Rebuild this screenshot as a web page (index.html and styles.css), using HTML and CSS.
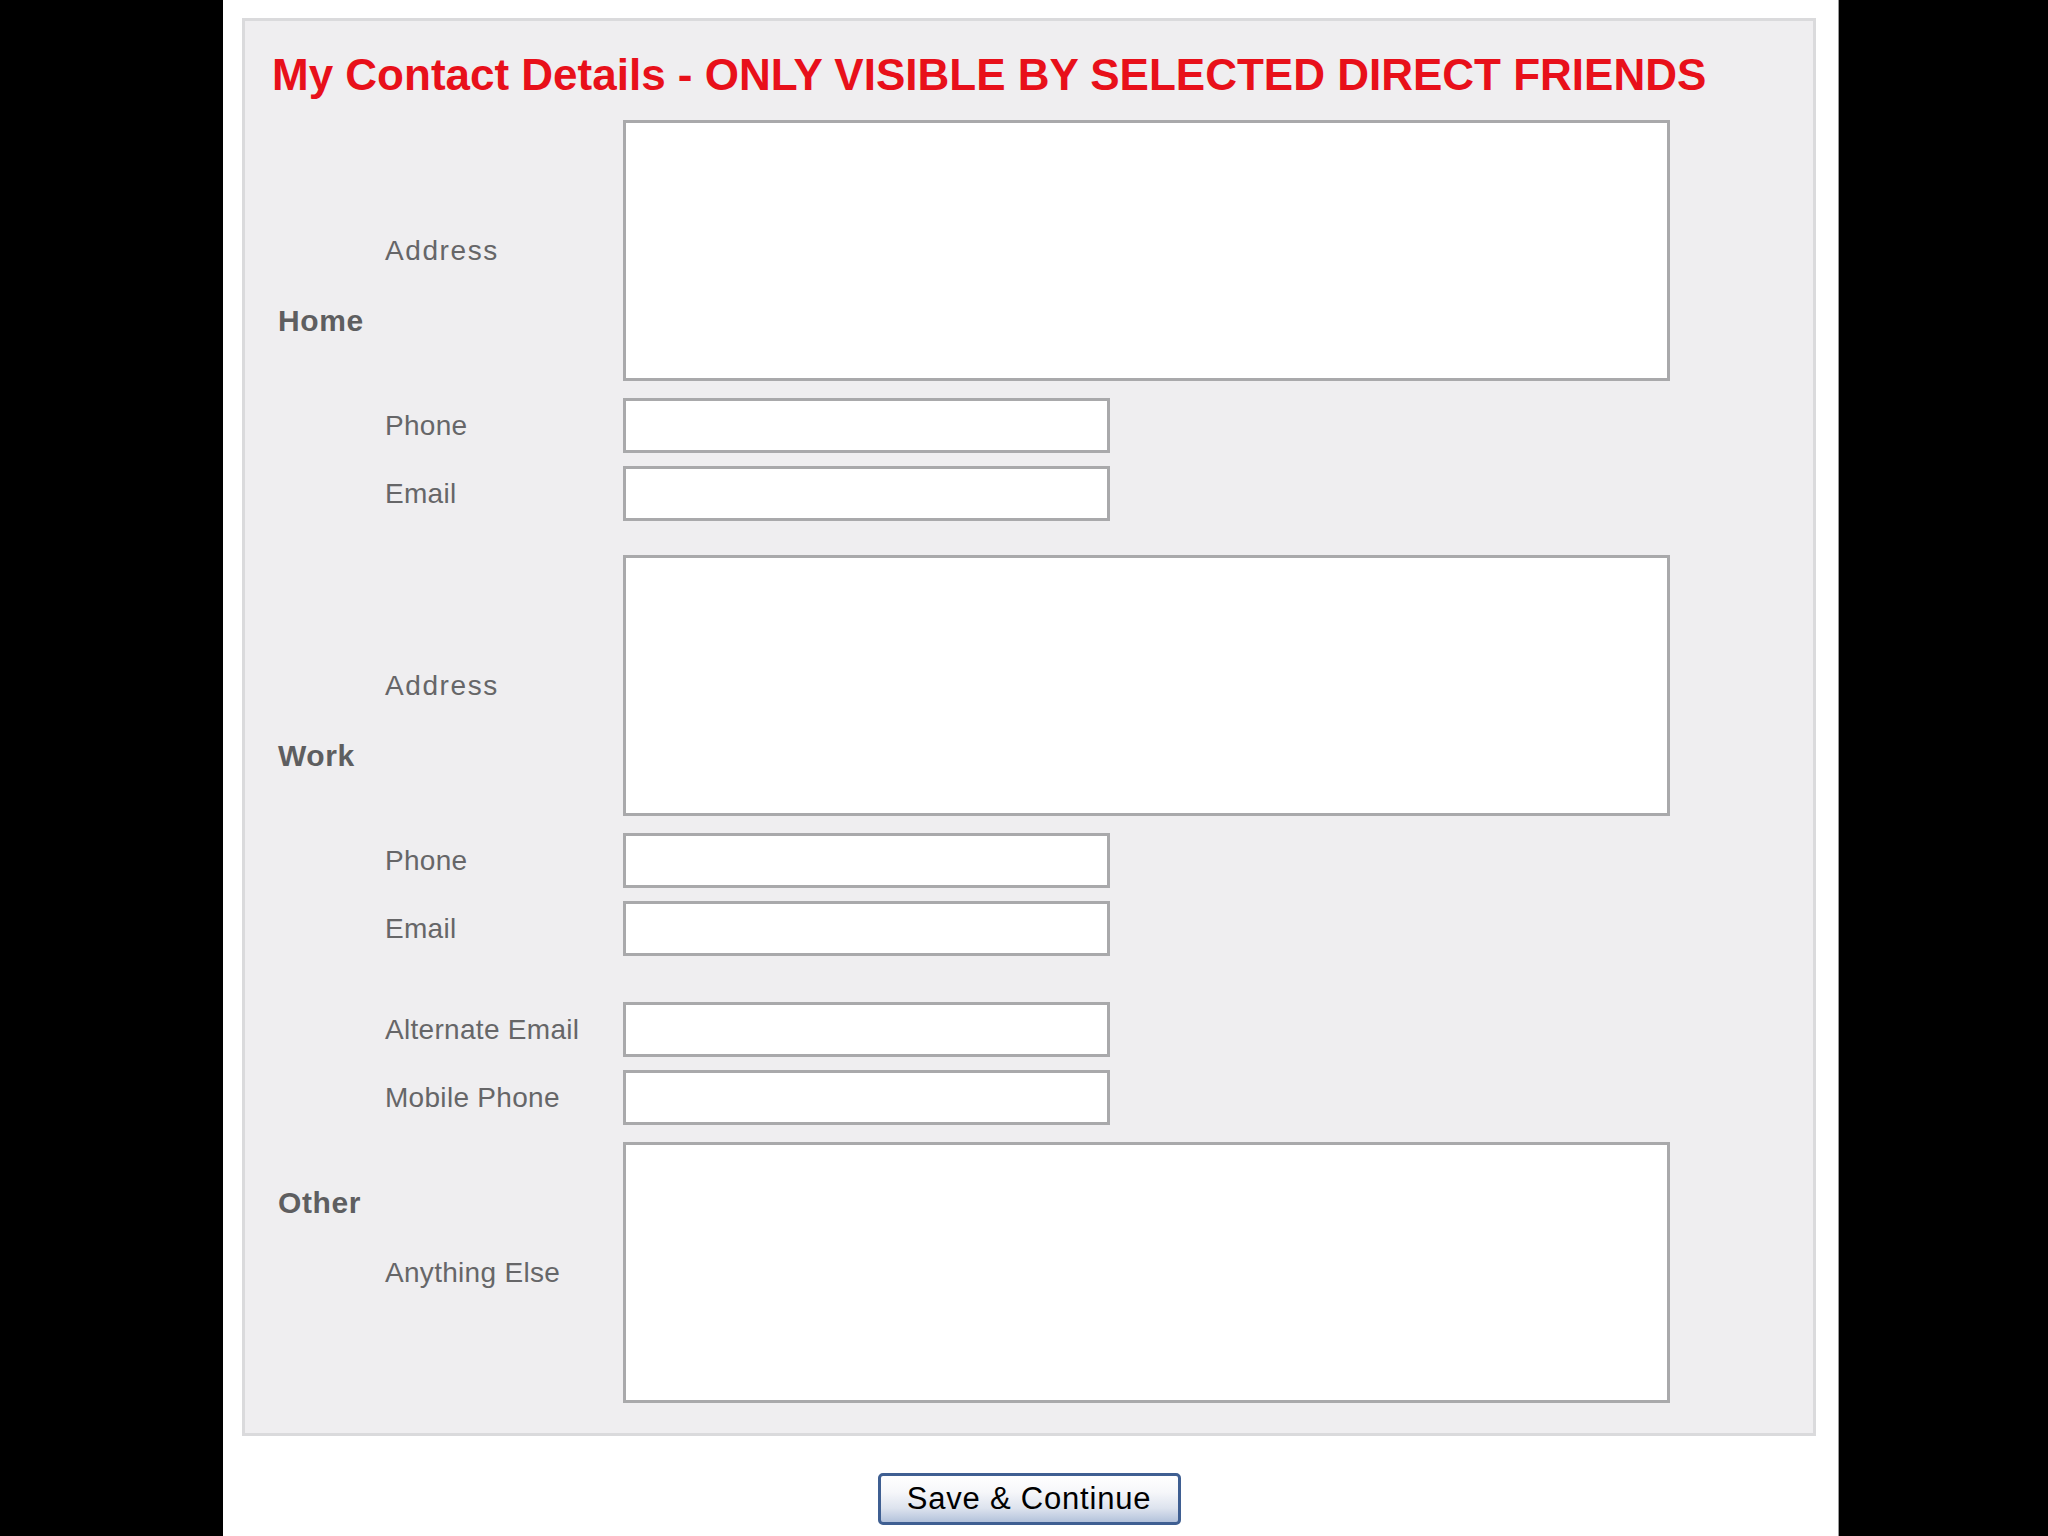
FILE: index.html
```html
<!DOCTYPE html>
<html>
<head>
<meta charset="utf-8">
<title>My Contact Details</title>
<link rel="stylesheet" href="styles.css">
</head>
<body>
<div class="page">
  <div class="panel">
    <h1 class="title">My Contact Details - ONLY VISIBLE BY SELECTED DIRECT FRIENDS</h1>

    <div class="section">
      <div class="group">Home</div>
      <div class="fields">
        <div class="field tall"><label class="label wide">Address</label><textarea class="area"></textarea></div>
        <div class="field"><label class="label">Phone</label><input class="box" type="text"></div>
        <div class="field"><label class="label">Email</label><input class="box" type="text"></div>
      </div>
    </div>

    <div class="section work">
      <div class="group">Work</div>
      <div class="fields">
        <div class="field tall"><label class="label wide">Address</label><textarea class="area"></textarea></div>
        <div class="field"><label class="label">Phone</label><input class="box" type="text"></div>
        <div class="field"><label class="label">Email</label><input class="box" type="text"></div>
      </div>
    </div>

    <div class="section other">
      <div class="group">Other</div>
      <div class="fields">
        <div class="field"><label class="label">Alternate Email</label><input class="box" type="text"></div>
        <div class="field"><label class="label">Mobile Phone</label><input class="box" type="text"></div>
        <div class="field tall"><label class="label">Anything Else</label><textarea class="area"></textarea></div>
      </div>
    </div>
  </div>

  <div class="actions">
    <button class="save" type="button">Save &amp; Continue</button>
  </div>
</div>
</body>
</html>
```
FILE: styles.css
```css
html, body {
  margin: 0;
  padding: 0;
  background: #000;
}

body {
  font-family: "Liberation Sans", Arial, sans-serif;
}

.page {
  box-sizing: border-box;
  width: 1616px;
  min-height: 1536px;
  margin-left: 223px;
  padding: 18px 22px 0 19px;
  background: #fff;
  border-right: 1px solid #9a9a9a;
}

.panel {
  box-sizing: border-box;
  background: #efeef0;
  border: 3px solid #dadadc;
  padding: 28px 20px 30px 27px;
}

.title {
  margin: 0 0 19px 0;
  font-size: 44px;
  line-height: 52px;
  font-weight: bold;
  color: #e8101a;
  white-space: nowrap;
}

.section {
  display: flex;
  align-items: center;
  margin-left: 6px;
}

.section.work {
  margin-top: 34px;
}

.section.other {
  margin-top: 46px;
}

.group {
  width: 107px;
  flex: none;
  font-size: 30px;
  font-weight: bold;
  color: #5e5e60;
  letter-spacing: 0.6px;
}

.fields {
  display: flex;
  flex-direction: column;
}

.field {
  display: flex;
  align-items: center;
}

.field + .field {
  margin-top: 13px;
}

.field.tall + .field {
  margin-top: 17px;
}

.field + .field.tall {
  margin-top: 17px;
}

.label {
  width: 238px;
  flex: none;
  font-size: 28px;
  color: #666668;
  letter-spacing: 0.3px;
}

.label.wide {
  letter-spacing: 1.6px;
}

.box,
.area {
  display: block;
  box-sizing: border-box;
  margin: 0;
  background: #fff;
  border: 3px solid #a9a9ab;
  border-radius: 0;
  outline: none;
  font-family: "Liberation Sans", Arial, sans-serif;
  font-size: 26px;
}

.box {
  width: 487px;
  height: 55px;
}

.area {
  width: 1047px;
  height: 261px;
  resize: none;
}

.actions {
  margin-top: 37px;
  display: flex;
  justify-content: center;
}

.save {
  box-sizing: border-box;
  width: 303px;
  height: 52px;
  padding: 0;
  border: 3px solid #3f5f92;
  border-radius: 5px;
  background: linear-gradient(to bottom, #ffffff 0%, #f6f7fa 35%, #dde3ee 70%, #b3c2db 100%);
  font-family: "Liberation Sans", Arial, sans-serif;
  font-size: 31px;
  letter-spacing: 0.8px;
  color: #000;
}
```
